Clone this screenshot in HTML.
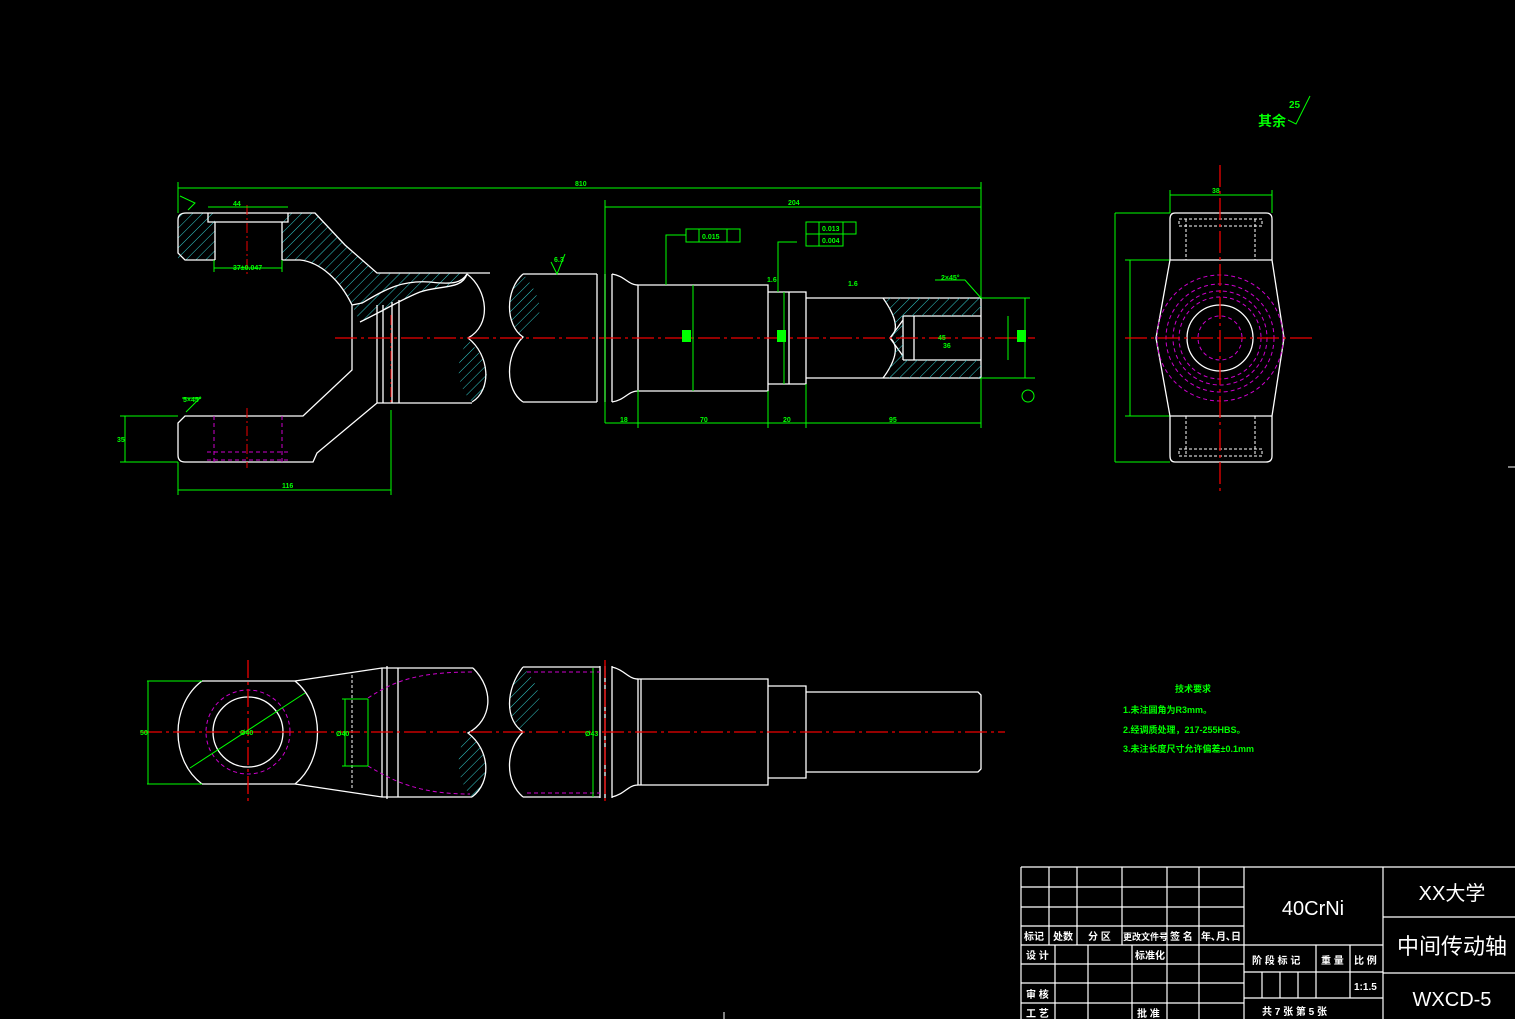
<!DOCTYPE html>
<html><head><meta charset="utf-8"><style>
html,body{margin:0;padding:0;background:#000;width:1515px;height:1019px;overflow:hidden}
svg{display:block}
text{font-family:"Liberation Sans","Noto Sans CJK SC",sans-serif}
</style></head><body>
<svg width="1515" height="1019" viewBox="0 0 1515 1019" xmlns="http://www.w3.org/2000/svg">
<defs>
<pattern id="h" patternUnits="userSpaceOnUse" width="7" height="7" patternTransform="rotate(45)">
<line x1="0" y1="0" x2="0" y2="7" stroke="#3cc" stroke-width="1"/>
</pattern>
</defs>
<rect width="1515" height="1019" fill="#000"/>

<!-- ===== FRONT VIEW ===== -->
<g fill="url(#h)" stroke="none">
<path d="M178,213 H215 V260 H178 Z"/>
<path d="M282,213 H315 L345,245 L377,273 H467 C462,290 440,285 420,292 C400,300 385,312 360,322 L352,305 C340,280 320,262 300,260 H282 Z"/>
<path d="M468,340 C490,362 495,385 472,402 C455,385 455,360 468,340 Z"/>
<path d="M523,274 C545,300 545,320 523,337 C505,320 505,295 523,274 Z"/>
</g>
<g fill="none" stroke="#fff" stroke-width="1.3">
<path d="M186,213 H315 L345,245 L377,273 H490"/>
<path d="M186,213 Q178,213 178,220 V253 L185,260 H215"/>
<path d="M282,260 H300 C320,262 340,280 352,305 V370 L303,416 H185 L178,423 V455 Q178,462 185,462 H313 L317,453 L377,403 H472"/>
<path d="M208,213 V222 H288 V213 M208,222 H288 M215,222 V260 M282,222 V260"/>
<path d="M352,305 L362,303 C385,290 400,280 430,282 C455,285 462,282 467,274"/>
<path d="M360,322 C385,310 400,300 420,292 C440,285 462,290 467,274"/>
<path d="M377,305 V403 M383,305 V403 M392,302 V403 M399,300 V403"/>
<path d="M467,274 C488,290 492,325 468,338 C490,355 492,390 472,402"/>
<path d="M523,274 C505,290 505,325 523,337 C505,355 505,390 523,402"/>
<path d="M523,274 H597 M523,402 H597 M597,274 V402 M605,274 V402 M612,274 V402"/>
<path d="M612,274 C625,276 628,285 638,285 M612,402 C625,400 628,391 638,391"/>
<path d="M638,285 H768 V391 H638 Z"/>
<path d="M768,292 H806 V384 H768 M789,292 V384"/>
<path d="M806,298 H981 V378 H806"/>
<path d="M883,298 C895,315 900,330 890,338 C900,346 895,362 883,378"/>
<path d="M903,316 H981 M903,360 H981 M903,316 V360 M914,316 V360 M890,338 L903,320 M890,338 L903,356"/>
</g>
<g fill="url(#h)"><path d="M883,298 H981 V316 H903 V360 H981 V378 H883 C895,362 900,346 890,338 C900,330 895,315 883,298 Z"/></g>
<line x1="335" y1="338" x2="1035" y2="338" stroke="#e00" stroke-width="1.3" stroke-dasharray="22,4,3,4"/>
<line x1="247" y1="205" x2="247" y2="275" stroke="#e00" stroke-dasharray="10,3,2,3"/>
<line x1="247" y1="408" x2="247" y2="468" stroke="#e00" stroke-dasharray="10,3,2,3"/>
<line x1="391" y1="315" x2="391" y2="405" stroke="#e00" stroke-dasharray="10,3,2,3"/>
<line x1="605" y1="265" x2="605" y2="410" stroke="#e00" stroke-dasharray="10,3,2,3"/>
<g fill="none" stroke="#c0c" stroke-width="1" stroke-dasharray="4,3">
<path d="M214,416 V462 M282,416 V462 M207,452 H290 M207,460 H290"/>
</g>
<!-- dims -->
<g stroke="#0f0" stroke-width="1" fill="none">
<path d="M178,188 H981 M178,182 V213 M981,182 V298"/>
<path d="M605,207 H981 M605,200 V423 M638,390 V428 M768,391 V428 M806,384 V428 M981,378 V428 M605,423 H981"/>
<path d="M178,490 H391 M178,462 V495 M391,410 V495"/>
<path d="M125,416 V462 M120,416 H178 M120,462 H178"/>
<path d="M214,268 H282 M214,260 V272 M282,260 V272 M208,207 H288"/>
<path d="M693,285 V391 M784,292 V384 M1008,316 V360 M1025,298 V378 M981,378 H1035 M981,298 H1030"/>
<path d="M666,285 V235 H686 M778,292 V242 H797"/>
<path d="M686,229 H740 V242 H686 Z M699,229 V242 M727,229 V242"/>
<path d="M806,222 H856 V234 H806 Z M806,234 V246 H843 V234 M819,222 V246 M843,222 V234"/>
<path d="M1115,213 H1170 M1115,462 H1170 M1115,213 V462 M1130,260 V416 M1125,260 H1170 M1125,416 H1170 M1170,195 H1272 M1170,190 V213 M1272,190 V213"/>
<path d="M935,280 H965 L981,298 M182,398 H200 L186,412"/>
<path d="M180,196 L195,203 L188,210 M551,262 L557,274 L565,254 M1288,120 L1296,124 L1310,96"/>
<circle cx="1028" cy="396" r="6"/>
</g>
<g fill="#0f0">
<rect x="682" y="330" width="9" height="12"/>
<rect x="777" y="330" width="9" height="12"/>
<rect x="1017" y="330" width="9" height="12"/>
</g>
<g fill="#0f0" font-size="7" font-weight="bold">
<text x="575" y="186">810</text>
<text x="788" y="205">204</text>
<text x="620" y="422">18</text>
<text x="700" y="422">70</text>
<text x="783" y="422">20</text>
<text x="889" y="422">95</text>
<text x="282" y="488">116</text>
<text x="117" y="442">35</text>
<text x="233" y="270">37±0.047</text>
<text x="233" y="206">44</text>
<text x="183" y="402">5×45°</text>
<text x="941" y="280">2×45°</text>
<text x="702" y="239">0.015</text>
<text x="822" y="231">0.013</text>
<text x="822" y="243">0.004</text>
<text x="1212" y="193">38</text>
<text x="554" y="262">6.3</text>
<text x="848" y="286">1.6</text>
<text x="767" y="282">1.6</text>
<text x="938" y="340">45</text>
<text x="943" y="348">36</text>
<text x="1289" y="108" font-size="10">25</text>
<text x="1258" y="126" font-size="14">其余</text>
</g>

<!-- ===== SIDE VIEW ===== -->
<g fill="none" stroke="#fff" stroke-width="1.3">
<path d="M1175,213 H1266 Q1272,213 1272,219 V260 L1284,338 L1272,416 V456 Q1272,462 1266,462 H1175 Q1170,462 1170,456 V416 L1156,338 L1170,260 V219 Q1170,213 1175,213 Z"/>
<path d="M1170,260 H1272 M1170,416 H1272"/>
<circle cx="1220" cy="338" r="33"/>
</g>
<g fill="none" stroke="#fff" stroke-width="1" stroke-dasharray="3,2">
<path d="M1179,219 H1262 V226 H1179 Z M1186,219 V260 M1255,219 V260 M1179,449 H1262 V456 H1179 Z M1186,416 V456 M1255,416 V456"/>
</g>
<g fill="none" stroke="#c0c" stroke-width="1" stroke-dasharray="4,3">
<circle cx="1220" cy="338" r="63"/><circle cx="1220" cy="338" r="54"/>
<circle cx="1220" cy="338" r="47"/><circle cx="1220" cy="338" r="41"/>
<circle cx="1220" cy="338" r="22"/>
</g>
<line x1="1220" y1="165" x2="1220" y2="492" stroke="#e00" stroke-width="1.3" stroke-dasharray="22,4,3,4"/>
<line x1="1125" y1="338" x2="1313" y2="338" stroke="#e00" stroke-width="1.3" stroke-dasharray="22,4,3,4"/>

<!-- ===== TOP VIEW ===== -->
<g fill="url(#h)">
<path d="M468,733 C490,750 492,782 472,797 C455,780 455,750 468,733 Z"/>
<path d="M523,667 C545,690 545,715 523,732 C505,715 505,690 523,667 Z"/>
</g>
<g fill="none" stroke="#fff" stroke-width="1.3">
<path d="M202,681 H295 M202,784 H295"/>
<path d="M202,681 C170,705 170,760 202,784 M295,681 C325,705 325,760 295,784"/>
<circle cx="248" cy="732" r="35"/>
<path d="M295,681 L382,668 H473 M295,784 L382,797 H472"/>
<path d="M382,668 V797 M387,666 V799 M398,668 V797"/>
<path d="M473,668 C495,690 492,720 468,733 C490,750 492,782 472,797"/>
<path d="M523,667 C505,690 505,720 523,732 C505,750 505,782 523,797"/>
<path d="M523,667 H600 M523,797 H600 M600,666 V798 M605,666 V798 M612,666 V798"/>
<path d="M612,667 C625,670 628,679 638,679 M612,797 C625,794 628,785 638,785"/>
<path d="M638,679 H768 V785 H638 Z M641,679 V785"/>
<path d="M768,686 H806 V778 H768"/>
<path d="M806,692 H978 L981,695 V769 L978,772 H806"/>
</g>
<g fill="none" stroke="#c0c" stroke-width="1" stroke-dasharray="4,3">
<circle cx="248" cy="732" r="42"/>
<path d="M368,698 C395,680 420,672 473,672 M368,766 C395,782 420,794 470,794 M527,672 H600 M527,793 H600"/>
</g>
<path d="M352,675 V790" stroke="#fff" stroke-dasharray="3,2"/>
<line x1="140" y1="732" x2="1005" y2="732" stroke="#e00" stroke-width="1.3" stroke-dasharray="22,4,3,4"/>
<line x1="248" y1="660" x2="248" y2="802" stroke="#e00" stroke-width="1.3" stroke-dasharray="18,4,3,4"/>
<line x1="605" y1="660" x2="605" y2="802" stroke="#e00" stroke-width="1.3" stroke-dasharray="18,4,3,4"/>
<g stroke="#0f0" fill="none">
<path d="M147,681 H202 M147,784 H202 M148,681 V784 M190,768 L305,693"/>
<path d="M342,699 H368 M342,766 H368 M345,699 V766 M368,699 V766"/>
<path d="M593,668 V797"/>
</g>
<g fill="#0f0" font-size="7" font-weight="bold">
<text x="140" y="735">50</text>
<text x="240" y="735">Ø40</text>
<text x="336" y="736">Ø40</text>
<text x="585" y="736">Ø43</text>
</g>
<g fill="#0f0" font-size="9" font-weight="bold">
<text x="1175" y="692">技术要求</text>
<text x="1123" y="713">1.未注圆角为R3mm。</text>
<text x="1123" y="733">2.经调质处理，217-255HBS。</text>
<text x="1123" y="752">3.未注长度尺寸允许偏差±0.1mm</text>
</g>

<!-- ===== TITLE BLOCK ===== -->
<g stroke="#fff" stroke-width="1.2" fill="none">
<path d="M1021,867 H1515 M1021,867 V1019 M1244,867 V1019 M1383,867 V1019"/>
<path d="M1021,887 H1244 M1021,907 H1244 M1021,926 H1244 M1021,945 H1244 M1021,964 H1244 M1021,983 H1244 M1021,1003 H1244"/>
<path d="M1049,867 V945 M1077,867 V945 M1122,867 V945 M1167,867 V1019 M1199,867 V1019"/>
<path d="M1055,945 V1019 M1088,945 V1019 M1132,945 V1019"/>
<path d="M1244,945 H1383 M1244,972 H1383 M1244,998 H1383 M1316,945 V998 M1350,945 V998 M1262,972 V998 M1280,972 V998 M1298,972 V998"/>
<path d="M1383,917 H1515 M1383,973 H1515"/>
</g>
<g fill="#fff" font-size="10" font-weight="bold">
<text x="1024" y="940">标记</text><text x="1053" y="940">处数</text><text x="1088" y="940">分 区</text>
<text x="1123" y="940" font-size="9">更改文件号</text><text x="1170" y="940">签 名</text><text x="1201" y="940">年､月､日</text>
<text x="1026" y="959">设 计</text><text x="1135" y="959">标准化</text>
<text x="1026" y="998">审 核</text><text x="1026" y="1017">工 艺</text><text x="1137" y="1017">批 准</text>
<text x="1252" y="964">阶 段 标 记</text><text x="1321" y="964">重 量</text><text x="1354" y="964">比 例</text>
<text x="1354" y="990">1:1.5</text>
<text x="1262" y="1015">共 7  张  第  5 张</text>
</g>
<g fill="#fff" font-family="Liberation Serif,Noto Serif CJK SC,serif" text-anchor="middle">
<text x="1313" y="915" font-size="20">40CrNi</text>
<text x="1452" y="900" font-size="20">XX大学</text>
<text x="1452" y="954" font-size="22">中间传动轴</text>
<text x="1452" y="1006" font-size="20">WXCD-5</text>
</g>
<line x1="724" y1="1012" x2="724" y2="1019" stroke="#fff"/>
<line x1="1508" y1="467" x2="1515" y2="467" stroke="#fff"/>
</svg>
</body></html>
